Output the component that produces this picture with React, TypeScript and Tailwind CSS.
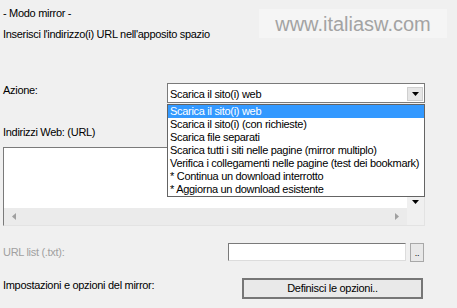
// Finestra "Modo mirror" — elenco azioni aperto

const ACTIONS = [
  "Scarica il sito(i) web",
  "Scarica il sito(i) (con richieste)",
  "Scarica file separati",
  "Scarica tutti i siti nelle pagine (mirror multiplo)",
  "Verifica i collegamenti nelle pagine (test dei bookmark)",
  "* Continua un download interrotto",
  "* Aggiorna un download esistente",
]

function Triangle({ dir }: { dir: "down" | "left" | "right" }) {
  if (dir === "down")
    return (
      <svg width="7" height="4" viewBox="0 0 7 4">
        <path d="M0 0h7L3.5 4z" fill="#000" />
      </svg>
    )
  return (
    <svg width="4" height="7" viewBox="0 0 4 7">
      <path d={dir === "left" ? "M4 0v7L0 3.5z" : "M0 0v7l4-3.5z"} fill="#a0a0a0" />
    </svg>
  )
}

export default function App() {
  return (
    <main
      className="relative h-[308px] w-[457px] overflow-hidden bg-[#f0f0f0] text-[11px] leading-[13px] tracking-[-0.3px] text-black"
      style={{ fontFamily: '"Liberation Sans", Arial, sans-serif' }}
    >
      {/* intestazione */}
      <div className="flex justify-between">
        <div className="pl-[3px] pt-[7px]">
          <p>- Modo mirror -</p>
          <p className="mt-[8px]">Inserisci l'indirizzo(i) URL nell'apposito spazio</p>
        </div>
        <div className="mr-[10px] mt-[9px] flex h-[29px] w-[188px] items-center justify-center bg-[#f5f5f5] text-[20px] leading-[24px] tracking-normal text-[#a3a3a3]">
          www.italiasw.com
        </div>
      </div>

      {/* azione */}
      <div className="mt-[42px] flex items-start justify-between pl-[3px] pr-[32px]">
        <span className="pt-[1px]">Azione:</span>
        <div className="flex h-[20px] w-[258px] border border-[#7a7a7a] bg-white">
          <span className="flex-1 pl-[2px] pt-[4px]">Scarica il sito(i) web</span>
          <div className="m-[1px] mt-[3px] flex h-[14px] w-[16px] items-center justify-center border border-[#cfcfcf] bg-[#e6e6e6]">
            <Triangle dir="down" />
          </div>
        </div>
      </div>

      {/* indirizzi */}
      <p className="mt-[23px] pl-[3px]">Indirizzi Web: (URL)</p>
      <div className="ml-[3px] mt-[8px] flex h-[79px] w-[422px] flex-col border border-b-[#e3e3e3] border-l-[#7a7a7a] border-r-[#e3e3e3] border-t-[#7a7a7a] bg-white">
        <div className="flex flex-1">
          <div className="flex-1" />
          <div className="flex w-[17px] flex-col justify-end bg-[#f0f0f0] pb-[4px]">
            <div className="flex justify-center">
              <Triangle dir="down" />
            </div>
          </div>
        </div>
        <div className="flex h-[17px]">
          <div className="flex flex-1 items-center justify-between bg-[#ebebeb] px-[8px]">
            <Triangle dir="left" />
            <Triangle dir="right" />
          </div>
          <div className="w-[17px] bg-[#f0f0f0]" />
        </div>
      </div>

      {/* lista url */}
      <div className="mt-[17px] flex items-center justify-between pl-[3px] pr-[33px]">
        <span className="text-[#a0a0a0]">URL list (.txt):</span>
        <div className="flex gap-[4px]">
          <div className="h-[18px] w-[178px] border border-b-[#dcdcdc] border-l-[#7a7a7a] border-r-[#dcdcdc] border-t-[#7a7a7a] bg-white" />
          <div className="flex h-[19px] w-[14px] items-end justify-center border border-[#a8a8a8] bg-[#e8e8e8] pb-[3px] text-[9px] leading-[9px]">
            ..
          </div>
        </div>
      </div>

      {/* opzioni */}
      <div className="mt-[16px] flex items-start justify-between pl-[3px] pr-[34px]">
        <span className="pt-[1px]">Impostazioni e opzioni del mirror:</span>
        <button className="flex h-[21px] w-[181px] items-center justify-center border-2 border-[#767676] bg-[#e9e9e9] pb-[1px]">
          Definisci le opzioni..
        </button>
      </div>

      {/* elenco aperto */}
      <ul className="absolute left-[167px] top-[104px] w-[258px] border border-[#646464] bg-white">
        {ACTIONS.map((a, i) => (
          <li
            key={a}
            className={
              i === 0
                ? "h-[13px] whitespace-nowrap bg-[#3399ff] pl-[2px] text-white"
                : "h-[13px] whitespace-nowrap pl-[2px]"
            }
          >
            {a}
          </li>
        ))}
      </ul>
    </main>
  )
}
